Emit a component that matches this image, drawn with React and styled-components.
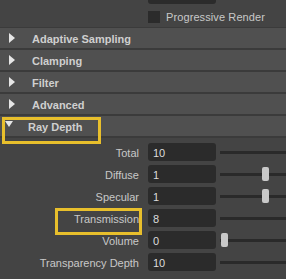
import React from 'react';
import styled, { createGlobalStyle, css } from 'styled-components';

const GlobalStyle = createGlobalStyle`
  html, body {
    margin: 0;
    padding: 0;
    background: #444444;
    overflow: hidden;
  }
  body {
    font-family: "Liberation Sans", Arial, sans-serif;
  }
`;

const sections = ['Adaptive Sampling', 'Clamping', 'Filter', 'Advanced'];

const attributes = [
  { label: 'Total', value: 10 },
  { label: 'Diffuse', value: 1 },
  { label: 'Specular', value: 1 },
  { label: 'Transmission', value: 8, marked: true },
  { label: 'Volume', value: 0 },
  { label: 'Transparency Depth', value: 10 },
];

const App = () => {
  return (
    <>
      <GlobalStyle />
      <Panel>
        <FieldRow>
          <Field />
        </FieldRow>
        <CheckRow>
          <CheckBox />
          <span>Progressive Render</span>
        </CheckRow>

        {sections.map((name) => (
          <Header key={name}>
            <ArrowRight />
            <HeaderText>{name}</HeaderText>
          </Header>
        ))}

        <Header marked>
          <ArrowDown />
          <HeaderText $shift>Ray Depth</HeaderText>
        </Header>

        <Body>
          {attributes.map((a) => (
            <AttrRow key={a.label}>
              <Label marked={a.marked}>{a.label}</Label>
              <Field>{a.value}</Field>
              <Slider>
                <Handle $pos={1 + a.value * 41} />
              </Slider>
            </AttrRow>
          ))}
        </Body>
      </Panel>
    </>
  );
};

export default App;

const markBox = css`
  position: relative;
  &::after {
    content: '';
    position: absolute;
    box-sizing: border-box;
    border: 3px solid #e8bf2c;
    pointer-events: none;
  }
`;

const Panel = styled.div`
  width: 286px;
  height: 279px;
  overflow: hidden;
  background: #444444;
  display: flex;
  flex-direction: column;
`;

const FieldRow = styled.div`
  margin-top: -16px;
  height: 22px;
  display: flex;
  align-items: center;
  padding-left: 148px;
`;

const Field = styled.div`
  box-sizing: border-box;
  width: 68px;
  height: 18px;
  flex-shrink: 0;
  background: #2b2b2b;
  border-radius: 3px;
  color: #dcdcdc;
  font-size: 11px;
  line-height: 20px;
  padding-left: 5px;
`;

const CheckRow = styled.div`
  height: 21px;
  display: flex;
  align-items: center;
  gap: 6px;
  padding-left: 148px;
  border-bottom: 1px solid #3b3b3b;
  color: #c8c8c8;
  font-size: 11px;
  letter-spacing: 0.1px;
  span {
    padding-top: 1px;
  }
`;

const CheckBox = styled.div`
  width: 12px;
  height: 12px;
  background: #2b2b2b;
`;

const Header = styled.div`
  height: 20px;
  display: flex;
  align-items: center;
  background: #505050;
  border-bottom: 2px solid #3b3b3b;
  ${({ marked }) =>
    marked &&
    css`
      ${markBox};
      &::after {
        left: 2px;
        top: 1px;
        width: 99px;
        height: 27px;
        z-index: 2;
      }
    `}
`;

const ArrowRight = styled.div`
  width: 0;
  height: 0;
  margin-left: 9px;
  border-top: 5px solid transparent;
  border-bottom: 5px solid transparent;
  border-left: 6px solid #e6e6e6;
`;

const ArrowDown = styled.div`
  width: 0;
  height: 0;
  margin-left: 5px;
  margin-top: -4px;
  border-left: 4px solid transparent;
  border-right: 4px solid transparent;
  border-top: 6px solid #e6e6e6;
`;

const HeaderText = styled.span`
  margin-left: ${({ $shift }) => ($shift ? '15px' : '17px')};
  color: #cfcfcf;
  font-size: 11px;
  font-weight: bold;
  padding-top: 1px;
`;

const Body = styled.div`
  padding-top: 3px;
  display: flex;
  flex-direction: column;
`;

const AttrRow = styled.div`
  height: 22px;
  display: flex;
  align-items: center;
`;

const Label = styled.div`
  width: 139px;
  flex-shrink: 0;
  margin-right: 9px;
  text-align: right;
  color: #c8c8c8;
  font-size: 11px;
  padding-top: 1px;
  ${({ marked }) =>
    marked &&
    css`
      ${markBox};
      &::after {
        right: -3px;
        top: -4px;
        width: 87px;
        height: 27px;
      }
    `}
`;

const Slider = styled.div`
  position: relative;
  flex-shrink: 0;
  margin-left: 4px;
  width: 90px;
  height: 3px;
  background: #2a2a2a;
`;

const Handle = styled.div.attrs(({ $pos }) => ({ style: { left: `${$pos}px` } }))`
  position: absolute;
  top: -6px;
  width: 7px;
  height: 14px;
  border-radius: 2px;
  background: #c9c9c9;
`;
